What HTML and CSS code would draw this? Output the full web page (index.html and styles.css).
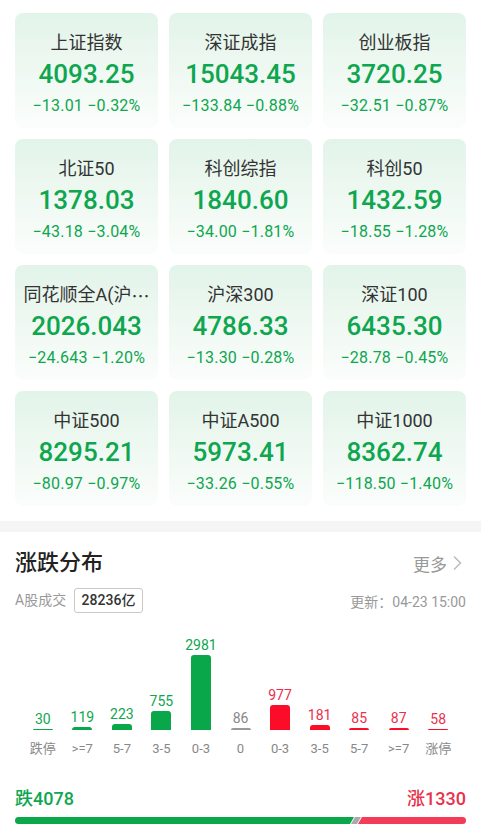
FILE: index.html
```html
<!DOCTYPE html>
<html>
	<head>
		<meta charset=utf-8>
		<title>行情</title>
		<link rel="stylesheet" href="styles.css">
	</head>
	<body>
		<div class="grid">
			<div class="card"><div class="name">上证指数</div><div class="value">4093.25</div><div class="chg">−13.01 −0.32%</div></div>
			<div class="card"><div class="name">深证成指</div><div class="value">15043.45</div><div class="chg">−133.84 −0.88%</div></div>
			<div class="card"><div class="name">创业板指</div><div class="value">3720.25</div><div class="chg">−32.51 −0.87%</div></div>
			<div class="card"><div class="name">北证50</div><div class="value">1378.03</div><div class="chg">−43.18 −3.04%</div></div>
			<div class="card"><div class="name">科创综指</div><div class="value">1840.60</div><div class="chg">−34.00 −1.81%</div></div>
			<div class="card"><div class="name">科创50</div><div class="value">1432.59</div><div class="chg">−18.55 −1.28%</div></div>
			<div class="card"><div class="name">同花顺全A(沪<span class="cjk">…</span></div><div class="value">2026.043</div><div class="chg">−24.643 −1.20%</div></div>
			<div class="card"><div class="name">沪深300</div><div class="value">4786.33</div><div class="chg">−13.30 −0.28%</div></div>
			<div class="card"><div class="name">深证100</div><div class="value">6435.30</div><div class="chg">−28.78 −0.45%</div></div>
			<div class="card"><div class="name">中证500</div><div class="value">8295.21</div><div class="chg">−80.97 −0.97%</div></div>
			<div class="card"><div class="name">中证A500</div><div class="value">5973.41</div><div class="chg">−33.26 −0.55%</div></div>
			<div class="card"><div class="name">中证1000</div><div class="value">8362.74</div><div class="chg">−118.50 −1.40%</div></div>
		</div>

		<div class="divider"></div>

		<div class="section">
			<div class="head">
				<div class="title">涨跌分布</div>
				<div class="more">更多
					<svg width="10" height="16" viewBox="0 0 10 16"><polyline points="2,1.5 8.5,8 2,14.5" fill="none" stroke="#bbb" stroke-width="1.5"/></svg>
				</div>
			</div>
			<div class="info">
				<div class="turnover">A股成交 <span class="badge">28236亿</span></div>
				<div class="update">更新：04-23 15:00</div>
			</div>

			<div class="chart">
				<div class="col down"><div class="plot"><div class="num">30</div><div class="bar" style="height:1px"></div></div><div class="lab">跌停</div></div>
				<div class="col down"><div class="plot"><div class="num">119</div><div class="bar" style="height:3px"></div></div><div class="lab">&gt;=7</div></div>
				<div class="col down"><div class="plot"><div class="num">223</div><div class="bar" style="height:5.6px"></div></div><div class="lab">5-7</div></div>
				<div class="col down"><div class="plot"><div class="num">755</div><div class="bar" style="height:19px"></div></div><div class="lab">3-5</div></div>
				<div class="col down"><div class="plot"><div class="num">2981</div><div class="bar" style="height:75px"></div></div><div class="lab">0-3</div></div>
				<div class="col flat"><div class="plot"><div class="num">86</div><div class="bar" style="height:2px"></div></div><div class="lab">0</div></div>
				<div class="col up"><div class="plot"><div class="num">977</div><div class="bar" style="height:24.6px"></div></div><div class="lab">0-3</div></div>
				<div class="col up"><div class="plot"><div class="num">181</div><div class="bar" style="height:4.6px"></div></div><div class="lab">3-5</div></div>
				<div class="col up"><div class="plot"><div class="num">85</div><div class="bar" style="height:2px"></div></div><div class="lab">5-7</div></div>
				<div class="col up"><div class="plot"><div class="num">87</div><div class="bar" style="height:2px"></div></div><div class="lab">&gt;=7</div></div>
				<div class="col up"><div class="plot"><div class="num">58</div><div class="bar" style="height:1.5px"></div></div><div class="lab">涨停</div></div>
			</div>

			<div class="totals">
				<span class="fall">跌4078</span>
				<span class="rise">涨1330</span>
			</div>
			<div class="ratio">
				<div class="seg g" style="flex:4078"></div>
				<div class="seg z"></div>
				<div class="seg r" style="flex:1330"></div>
			</div>
		</div>
	</body>
</html>
```

FILE: styles.css
```css
body {
	margin: 0;
	background: #fff;
	font-family: Roboto, "Noto Sans CJK SC", sans-serif;
	color: #333;
	overflow: hidden;
}

/* index cards */
.grid {
	display: grid;
	grid-template-columns: repeat(3, minmax(0, 1fr));
	gap: 11px;
	padding: 13px 15px 15px;
}
.card {
	height: 115px;
	box-sizing: border-box;
	padding: 18px 6px 0;
	border-radius: 8px;
	background: linear-gradient(180deg, #e2f4e9 0%, #f0f9f3 55%, #fbfdfc 100%);
	text-align: center;
}
.name {
	height: 24px;
	font-size: 18px;
	line-height: 24px;
	color: #333;
	white-space: nowrap;
}
.cjk {
	font-family: "Noto Sans CJK SC", sans-serif;
	vertical-align: top;
}
.value {
	margin-top: 4px;
	font-size: 26px;
	line-height: 30px;
	font-weight: 500;
	color: #0ea64f;
}
.chg {
	margin-top: 7px;
	font-size: 16px;
	line-height: 20px;
	letter-spacing: 0.2px;
	color: #0ea64f;
}

.divider {
	height: 11px;
	background: #f5f5f6;
}

/* distribution section */
.section {
	padding: 0 15px;
}
.head {
	display: flex;
	justify-content: space-between;
	align-items: center;
	padding-top: 16px;
	height: 30px;
}
.title {
	font-size: 22px;
	line-height: 30px;
	font-weight: 500;
	color: #222;
}
.more {
	display: flex;
	align-items: center;
	gap: 5px;
	padding-right: 4px;
	font-size: 17px;
	color: #999;
}
.info {
	display: flex;
	justify-content: space-between;
	align-items: center;
	margin-top: 10px;
	font-size: 14px;
	color: #999;
}
.badge {
	display: inline-block;
	margin-left: 4px;
	padding: 0 7px;
	line-height: 23px;
	border: 1px solid #c8c8c8;
	border-radius: 3px;
	color: #333;
	font-weight: 500;
}

.chart {
	display: flex;
	padding: 0 8px;
	margin-top: 12px;
}
.col {
	flex: 1;
	display: flex;
	flex-direction: column;
	align-items: center;
}
.plot {
	height: 105px;
	display: flex;
	flex-direction: column;
	justify-content: flex-end;
	align-items: center;
}
.num {
	font-size: 14px;
	line-height: 18px;
	margin-bottom: 1px;
}
.bar {
	width: 20px;
	border-radius: 3px 3px 0 0;
}
.lab {
	margin-top: 9px;
	font-size: 13px;
	line-height: 20px;
	color: #888;
}
.down .num { color: #0ea64f; }
.down .bar { background: #0aa64a; }
.up .num { color: #e9304c; }
.up .bar { background: #fb0d2a; }
.flat .num { color: #888; }
.flat .bar { background: #999; }

.totals {
	display: flex;
	justify-content: space-between;
	margin-top: 28px;
	font-size: 18px;
	line-height: 24px;
	font-weight: 500;
}
.fall { color: #0ea64f; }
.rise { color: #e9304c; }
.ratio {
	display: flex;
	gap: 1px;
	height: 7px;
	margin-top: 6px;
	border-radius: 4px;
	overflow: hidden;
}
.seg {
	transform: skewX(-30deg);
}
.seg.g {
	background: #0aa84a;
	margin-left: -6px;
}
.seg.z {
	width: 6px;
	background: #a9a9a9;
}
.seg.r {
	background: #f43b57;
	margin-right: -6px;
}
```
